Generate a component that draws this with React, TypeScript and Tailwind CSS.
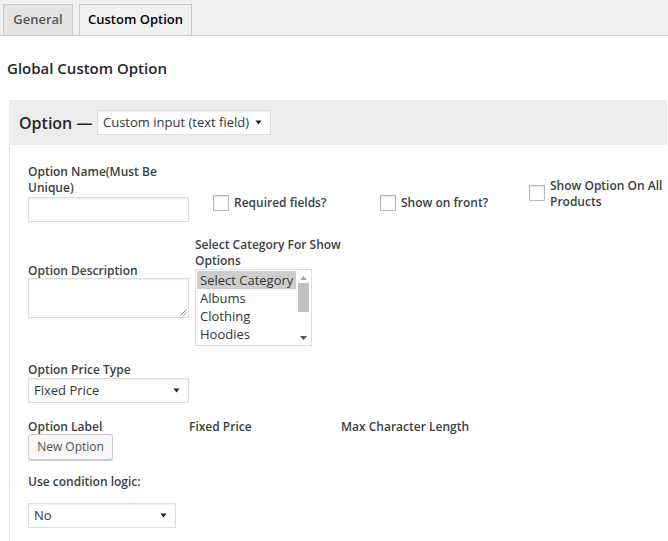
import React from "react";

const Caret = () => (
  <svg width="7" height="5" viewBox="0 0 7 5" className="shrink-0">
    <polygon points="0.5,0.5 6.5,0.5 3.5,4.5" fill="#222" />
  </svg>
);

const Select = ({ label, w, pr }: { label: string; w: string; pr?: string }) => (
  <div
    className={`${w} h-[25px] bg-white border border-[#ddd] shadow-[inset_0_1px_2px_rgba(0,0,0,0.07)] flex items-center justify-between pl-[5px] ${pr ?? "pr-[8px]"} text-[13px] text-[#32373c] whitespace-nowrap`}
  >
    <span>{label}</span>
    <Caret />
  </div>
);

const Checkbox = () => (
  <div className="w-[16px] h-[16px] shrink-0 bg-white border border-[#b4b9be] shadow-[inset_0_1px_2px_rgba(0,0,0,0.1)]" />
);

const Label = ({ children }: { children: React.ReactNode }) => (
  <div className="text-[12px] leading-[16px] font-semibold text-[#3a3f44] whitespace-nowrap">{children}</div>
);

export default function App() {
  return (
    <div className="w-[668px] h-[541px] overflow-hidden bg-white font-['Open_Sans',sans-serif]">
      {/* Tabs */}
      <div className="h-[36px] bg-[#f1f1f1] border-b border-[#ccc] flex items-end pl-[3px] gap-[6px]">
        <div className="h-[32px] w-[70px] -mb-px border border-[#ccc] bg-[#e4e4e4] text-[#555] text-[13px] font-semibold flex items-center justify-center">
          General
        </div>
        <div className="h-[32px] w-[113px] -mb-px border border-[#ccc] bg-[#f1f1f1] text-[#000] text-[13px] font-semibold flex items-center justify-center">
          Custom Option
        </div>
      </div>

      {/* Heading */}
      <div className="mt-[22px] h-[20px] leading-[20px] pl-[7px] text-[15px] font-semibold text-[#23282d]">
        Global Custom Option
      </div>

      {/* Panel */}
      <div className="mt-[22px] ml-[9px] w-[658px]">
        <div className="h-[45px] bg-[#ededed] flex items-center pl-[10px]">
          <div className="w-[78px] text-[16px] font-semibold text-[#23282d] whitespace-nowrap">Option —</div>
          <Select label="Custom input (text field)" w="w-[174px]" pr="pr-[8px]" />
        </div>

        <div className="border-l border-[#e5e5e5] pl-[18px] pt-[19px] pb-[20px]">
          {/* Row 1 */}
          <div className="flex items-start">
            <div className="w-[161px]">
              <Label>
                Option Name(Must Be
                <br />
                Unique)
              </Label>
              <div className="mt-[1px] h-[25px] w-[161px] bg-white border border-[#ddd] shadow-[inset_0_1px_2px_rgba(0,0,0,0.07)]" />
            </div>
            <div className="ml-[24px] w-[167px] mt-[31px] flex items-center">
              <Checkbox />
              <div className="ml-[5px]">
                <Label>Required fields?</Label>
              </div>
            </div>
            <div className="w-[149px] mt-[31px] flex items-center">
              <Checkbox />
              <div className="ml-[5px]">
                <Label>Show on front?</Label>
              </div>
            </div>
            <div className="mt-[14px] flex items-start">
              <div className="mt-[7px]">
                <Checkbox />
              </div>
              <div className="ml-[5px]">
                <Label>
                  Show Option On All
                  <br />
                  Products
                </Label>
              </div>
            </div>
          </div>

          {/* Row 2 */}
          <div className="mt-[15px] flex items-start">
            <div className="w-[161px] mt-[26px]">
              <Label>Option Description</Label>
              <div className="-mt-[1px] relative h-[40px] w-[161px] bg-white border border-[#ddd] shadow-[inset_0_1px_2px_rgba(0,0,0,0.07)]">
                <svg width="7" height="7" viewBox="0 0 7 7" className="absolute right-[1px] bottom-[1px]">
                  <line x1="6.5" y1="0.5" x2="0.5" y2="6.5" stroke="#888" strokeWidth="1" />
                  <line x1="6.5" y1="3.5" x2="3.5" y2="6.5" stroke="#888" strokeWidth="1" />
                </svg>
              </div>
            </div>
            <div className="ml-[6px]">
              <Label>
                Select Category For Show
                <br />
                Options
              </Label>
              <div className="h-[77px] w-[117px] bg-white border border-[#ddd] flex">
                <div className="flex-1 pt-[1px] pl-[1px] text-[13px] leading-[18px] text-[#32373c]">
                  <div className="bg-[#cecece] pl-[3px]">Select Category</div>
                  <div className="pl-[3px]">Albums</div>
                  <div className="pl-[3px]">Clothing</div>
                  <div className="pl-[3px]">Hoodies</div>
                </div>
                <div className="w-[15px] flex flex-col items-center pt-[6px] pb-[5px]">
                  <svg width="7" height="4" viewBox="0 0 7 4">
                    <polygon points="0,4 7,4 3.5,0" fill="#a3a3a3" />
                  </svg>
                  <div className="mt-[3px] w-[11px] h-[29px] bg-[#c1c1c1]" />
                  <div className="flex-1" />
                  <svg width="7" height="4" viewBox="0 0 7 4">
                    <polygon points="0,0 7,0 3.5,4" fill="#505050" />
                  </svg>
                </div>
              </div>
            </div>
          </div>

          {/* Row 3 */}
          <div className="mt-[16px]">
            <Label>Option Price Type</Label>
            <Select label="Fixed Price" w="w-[161px]" />
          </div>

          {/* Row 4 */}
          <div className="mt-[15px]">
            <div className="flex pt-[1px]">
              <div className="w-[161px]">
                <Label>Option Label</Label>
              </div>
              <div className="w-[152px]">
                <Label>Fixed Price</Label>
              </div>
              <Label>Max Character Length</Label>
            </div>
            <div className="-mt-[1px] h-[26px] w-[85px] bg-[#f7f7f7] border border-[#ccc] rounded-[3px] shadow-[0_1px_0_#ccc] flex items-center justify-center text-[12px] text-[#555]">
              New Option
            </div>
          </div>

          {/* Row 5 */}
          <div className="mt-[14px]">
            <Label>Use condition logic:</Label>
            <div className="mt-[13px]">
              <Select label="No" w="w-[148px]" />
            </div>
          </div>
        </div>
      </div>
    </div>
  );
}
